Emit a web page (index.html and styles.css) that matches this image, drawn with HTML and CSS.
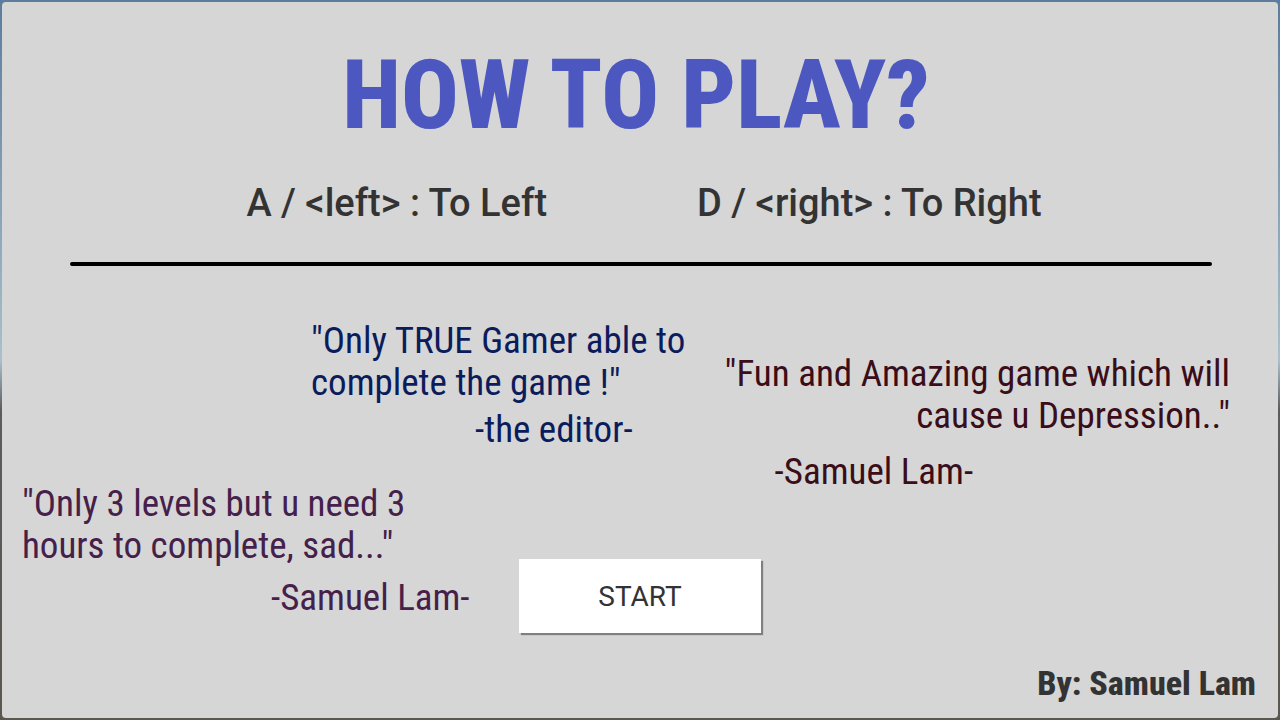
FILE: index.html
```html
<!DOCTYPE html>
<html lang="en">
<head>
  <meta charset="UTF-8">
  <meta name="viewport" content="width=device-width, initial-scale=1.0">
  <title>How to play?</title>
  <link rel="stylesheet" href="styles.css">
</head>
<body>

  <main class="panel">
    <h1>HOW TO PLAY?</h1>

    <div class="controls">
      <p>A / &lt;left&gt; : To Left</p>
      <p>D / &lt;right&gt; : To Right</p>
    </div>

    <hr>

    <div class="content">
      <figure class="quote editor">
        <blockquote>"Only TRUE Gamer able to<br>complete the game !"</blockquote>
        <figcaption>-the editor-</figcaption>
      </figure>

      <figure class="quote fun">
        <blockquote>"Fun and Amazing game which will<br>cause u Depression.."</blockquote>
        <figcaption>-Samuel Lam-</figcaption>
      </figure>

      <figure class="quote levels">
        <blockquote>"Only 3 levels but u need 3<br>hours to complete, sad..."</blockquote>
        <figcaption>-Samuel Lam-</figcaption>
      </figure>

      <button type="button" class="start">START</button>
    </div>

    <footer>By: Samuel Lam</footer>
  </main>

</body>
</html>
```
FILE: styles.css
```css
* { box-sizing: border-box; margin: 0; }

body {
  min-height: 100vh;
  padding: 2px;
  display: flex;
  background: linear-gradient(#5b7c9c, #a9c0cc 50%, #5c5c5c 57%, #5a5650);
  font-family: Roboto, sans-serif;
  color: #333;
}

.panel {
  flex: 1;
  display: flex;
  flex-direction: column;
  background-color: #d6d6d6;
  border-radius: 4px;
}

h1 {
  margin-top: 42px;
  padding-right: 8px;
  font-family: "Roboto Condensed", Roboto, sans-serif;
  font-size: 96px;
  line-height: 102px;
  font-weight: 800;
  text-align: center;
  color: #4c58c0;
}

.controls {
  display: flex;
  justify-content: center;
  gap: 150px;
  margin-top: 35px;
  padding-left: 8px;
  font-size: 38px;
  line-height: 44px;
  font-weight: 500;
}

hr {
  margin: 37px 66px 0 68px;
  border: 0;
  border-radius: 2px;
  height: 4px;
  background-color: #000;
}

/* the quotes are scattered, so their grid areas overlap */
.content {
  flex: 1;
  display: grid;
  grid-template-columns: 1fr 1fr;
  grid-template-rows: auto auto;
  align-content: start;
  padding: 54px 48px 0 20px;
}

.quote {
  font-family: "Roboto Condensed", Roboto, sans-serif;
  font-size: 37px;
  line-height: 42px;
  font-weight: 400;
  white-space: nowrap;
}

.editor {
  grid-area: 1 / 1 / 2 / 2;
  padding-left: 289px;
  margin-bottom: 32px;
  color: #0b1c5c;
}

.editor figcaption { margin-top: 5px; padding-left: 164px; }

.fun {
  grid-area: 1 / 1 / 3 / 3;
  justify-self: end;
  padding-top: 33px;
  text-align: right;
  color: #3a0d18;
}

.fun figcaption { margin-top: 14px; padding-left: 50px; text-align: left; }

.levels {
  grid-area: 2 / 1 / 3 / 2;
  color: #45204a;
}

.levels figcaption { margin-top: 10px; padding-left: 249px; }

.start {
  grid-area: 2 / 1 / 3 / 3;
  justify-self: center;
  align-self: end;
  margin: 0 0 -14px 28px;
  width: 242px;
  height: 74px;
  border: 0;
  background-color: #fff;
  box-shadow: 2px 2px 1px #808080;
  font-family: Roboto, sans-serif;
  font-size: 28px;
  color: #333;
  cursor: pointer;
}

footer {
  padding: 0 22px 14px;
  font-family: "Roboto Condensed", Roboto, sans-serif;
  font-size: 34px;
  line-height: 42px;
  font-weight: 800;
  text-align: right;
}
```
